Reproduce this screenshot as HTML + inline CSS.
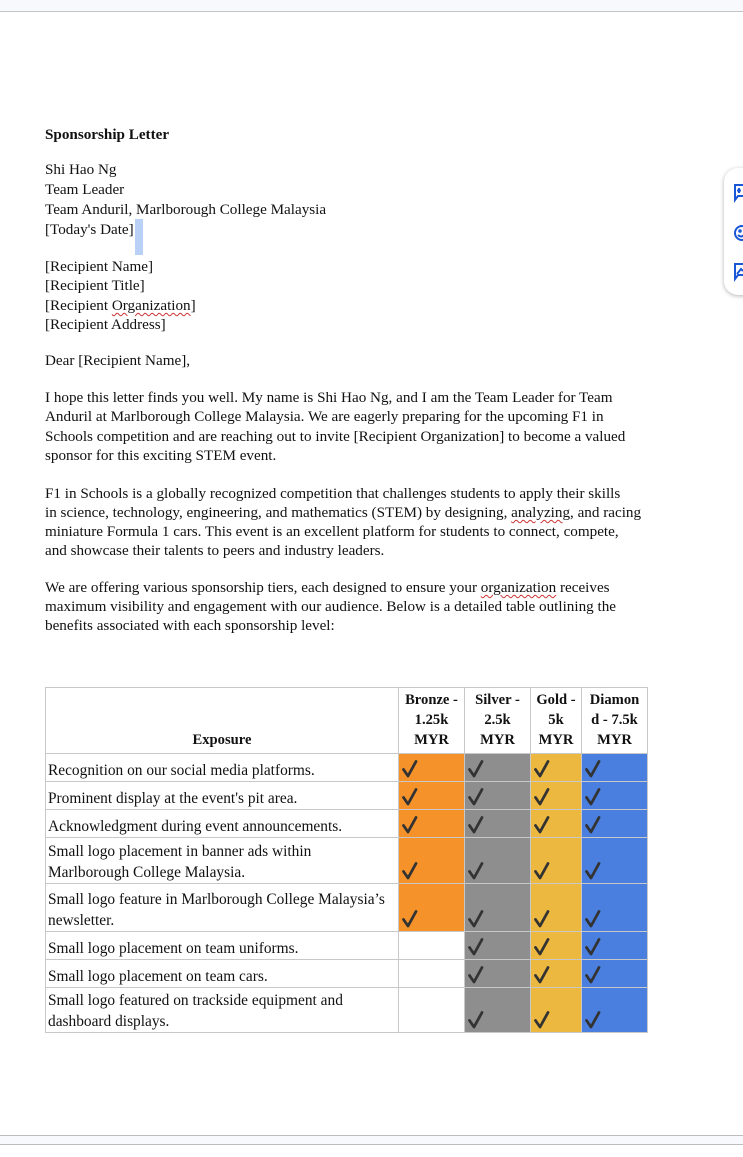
<!DOCTYPE html>
<html><head><meta charset="utf-8"><style>
body{margin:0;width:743px;height:1157px;position:relative;background:#fff;overflow:hidden;font-family:"Liberation Serif",serif;font-size:15.15px;color:#111}
.top{position:absolute;left:0;top:0;width:743px;height:11px;background:#f8f9fd;border-bottom:1px solid #c4c4c4}
.bot{position:absolute;left:0;top:1135px;width:743px;height:8px;background:#f8f9fd;border-top:1px solid #bdbdbd;border-bottom:1px solid #bdbdbd}
.l{position:absolute;left:45px;line-height:19.5px;white-space:nowrap}
.b{font-weight:bold}
.sq{text-decoration:underline wavy #c33;text-decoration-thickness:1px;text-underline-offset:2px}
.side{position:absolute;left:724px;top:168px;width:40px;height:127px;background:#fff;border-radius:14px;box-shadow:0 1px 4px rgba(0,0,0,.3)}
table{position:absolute;left:45px;top:687px;border-collapse:collapse;table-layout:fixed}
td{border:1px solid #c8c8c8;padding:0 2px;line-height:21px;vertical-align:bottom;font-size:15.4px;white-space:nowrap}
th{border:1px solid #c8c8c8;font-weight:bold;line-height:20px;vertical-align:bottom;padding:0 0 3px;text-align:center;font-size:14.6px;white-space:nowrap}
.o{background:#f6922a}.g{background:#8e8e8e}.y{background:#ecb83f}.d{background:#4a7fe0}
td.c{padding:0 0 3px 3px;line-height:0}
</style></head><body>
<div class="top"></div>
<div class="l b" style="top:125px">Sponsorship Letter</div>
<div class="l" style="top:160px">Shi Hao Ng</div>
<div class="l" style="top:180px">Team Leader</div>
<div class="l" style="top:200px">Team Anduril, Marlborough College Malaysia</div>
<div class="l" style="top:220px">[Today's Date]</div>
<div style="position:absolute;left:135px;top:219px;width:8px;height:36px;background:#b9d0f7"></div>
<div class="l" style="top:257px">[Recipient Name]</div>
<div class="l" style="top:276px">[Recipient Title]</div>
<div class="l" style="top:296px">[Recipient <span class="sq">Organization</span>]</div>
<div class="l" style="top:315px">[Recipient Address]</div>
<div class="l" style="top:351px">Dear [Recipient Name],</div>
<div class="l" style="top:388px">I hope this letter finds you well. My name is Shi Hao Ng, and I am the Team Leader for Team</div>
<div class="l" style="top:407px">Anduril at Marlborough College Malaysia. We are eagerly preparing for the upcoming F1 in</div>
<div class="l" style="top:427px">Schools competition and are reaching out to invite [Recipient Organization] to become a valued</div>
<div class="l" style="top:446px">sponsor for this exciting STEM event.</div>
<div class="l" style="top:484px">F1 in Schools is a globally recognized competition that challenges students to apply their skills</div>
<div class="l" style="top:503px">in science, technology, engineering, and mathematics (STEM) by designing, <span class="sq">analyzing</span>, and racing</div>
<div class="l" style="top:522px">miniature Formula 1 cars. This event is an excellent platform for students to connect, compete,</div>
<div class="l" style="top:541px">and showcase their talents to peers and industry leaders.</div>
<div class="l" style="top:578px">We are offering various sponsorship tiers, each designed to ensure your <span class="sq">organization</span> receives</div>
<div class="l" style="top:597px">maximum visibility and engagement with our audience. Below is a detailed table outlining the</div>
<div class="l" style="top:616px">benefits associated with each sponsorship level:</div>
<div class="side">
<svg width="20" height="127" viewBox="0 0 20 127"><g fill="none" stroke="#1a57d6" stroke-width="2">
<path d="M11 17h9v11h-6l-3 4z"/><path d="M15 20v5M13 22.5h4"/>
<circle cx="18" cy="65" r="7"/><circle cx="16" cy="63" r=".8"/><path d="M14 67q3 3 6 0"/>
<path d="M11 96h9v11h-6l-3 4z"/><path d="M13 106l4-5 2 2"/></g></svg>
</div>
<svg width="0" height="0" style="position:absolute"><defs><symbol id="ck" viewBox="0 0 16 18"><path d="M1.5 9.5l4.5 6.5L14 1.5" fill="none" stroke="#333" stroke-width="2.8" stroke-linecap="round" stroke-linejoin="round"/></symbol></defs></svg>
<table>
<colgroup><col style="width:353px"><col style="width:66px"><col style="width:66px"><col style="width:51px"><col style="width:66px"></colgroup>
<tr style="height:66px"><th>Exposure</th><th>Bronze -<br>1.25k<br>MYR</th><th>Silver -<br>2.5k<br>MYR</th><th>Gold -<br>5k<br>MYR</th><th>Diamon<br>d - 7.5k<br>MYR</th></tr>
<tr style="height:28px"><td>Recognition on our social media platforms.</td><td class="c o"><svg width="16" height="18"><use href="#ck"/></svg></td><td class="c g"><svg width="16" height="18"><use href="#ck"/></svg></td><td class="c y"><svg width="16" height="18"><use href="#ck"/></svg></td><td class="c d"><svg width="16" height="18"><use href="#ck"/></svg></td></tr>
<tr style="height:28px"><td>Prominent display at the event's pit area.</td><td class="c o"><svg width="16" height="18"><use href="#ck"/></svg></td><td class="c g"><svg width="16" height="18"><use href="#ck"/></svg></td><td class="c y"><svg width="16" height="18"><use href="#ck"/></svg></td><td class="c d"><svg width="16" height="18"><use href="#ck"/></svg></td></tr>
<tr style="height:28px"><td>Acknowledgment during event announcements.</td><td class="c o"><svg width="16" height="18"><use href="#ck"/></svg></td><td class="c g"><svg width="16" height="18"><use href="#ck"/></svg></td><td class="c y"><svg width="16" height="18"><use href="#ck"/></svg></td><td class="c d"><svg width="16" height="18"><use href="#ck"/></svg></td></tr>
<tr style="height:46px"><td>Small logo placement in banner ads within<br>Marlborough College Malaysia.</td><td class="c o"><svg width="16" height="18"><use href="#ck"/></svg></td><td class="c g"><svg width="16" height="18"><use href="#ck"/></svg></td><td class="c y"><svg width="16" height="18"><use href="#ck"/></svg></td><td class="c d"><svg width="16" height="18"><use href="#ck"/></svg></td></tr>
<tr style="height:48px"><td>Small logo feature in Marlborough College Malaysia’s<br>newsletter.</td><td class="c o"><svg width="16" height="18"><use href="#ck"/></svg></td><td class="c g"><svg width="16" height="18"><use href="#ck"/></svg></td><td class="c y"><svg width="16" height="18"><use href="#ck"/></svg></td><td class="c d"><svg width="16" height="18"><use href="#ck"/></svg></td></tr>
<tr style="height:28px"><td>Small logo placement on team uniforms.</td><td class="c"></td><td class="c g"><svg width="16" height="18"><use href="#ck"/></svg></td><td class="c y"><svg width="16" height="18"><use href="#ck"/></svg></td><td class="c d"><svg width="16" height="18"><use href="#ck"/></svg></td></tr>
<tr style="height:28px"><td>Small logo placement on team cars.</td><td class="c"></td><td class="c g"><svg width="16" height="18"><use href="#ck"/></svg></td><td class="c y"><svg width="16" height="18"><use href="#ck"/></svg></td><td class="c d"><svg width="16" height="18"><use href="#ck"/></svg></td></tr>
<tr style="height:45px"><td>Small logo featured on trackside equipment and<br>dashboard displays.</td><td class="c"></td><td class="c g"><svg width="16" height="18"><use href="#ck"/></svg></td><td class="c y"><svg width="16" height="18"><use href="#ck"/></svg></td><td class="c d"><svg width="16" height="18"><use href="#ck"/></svg></td></tr>
</table>
<div class="bot"></div>
</body></html>
